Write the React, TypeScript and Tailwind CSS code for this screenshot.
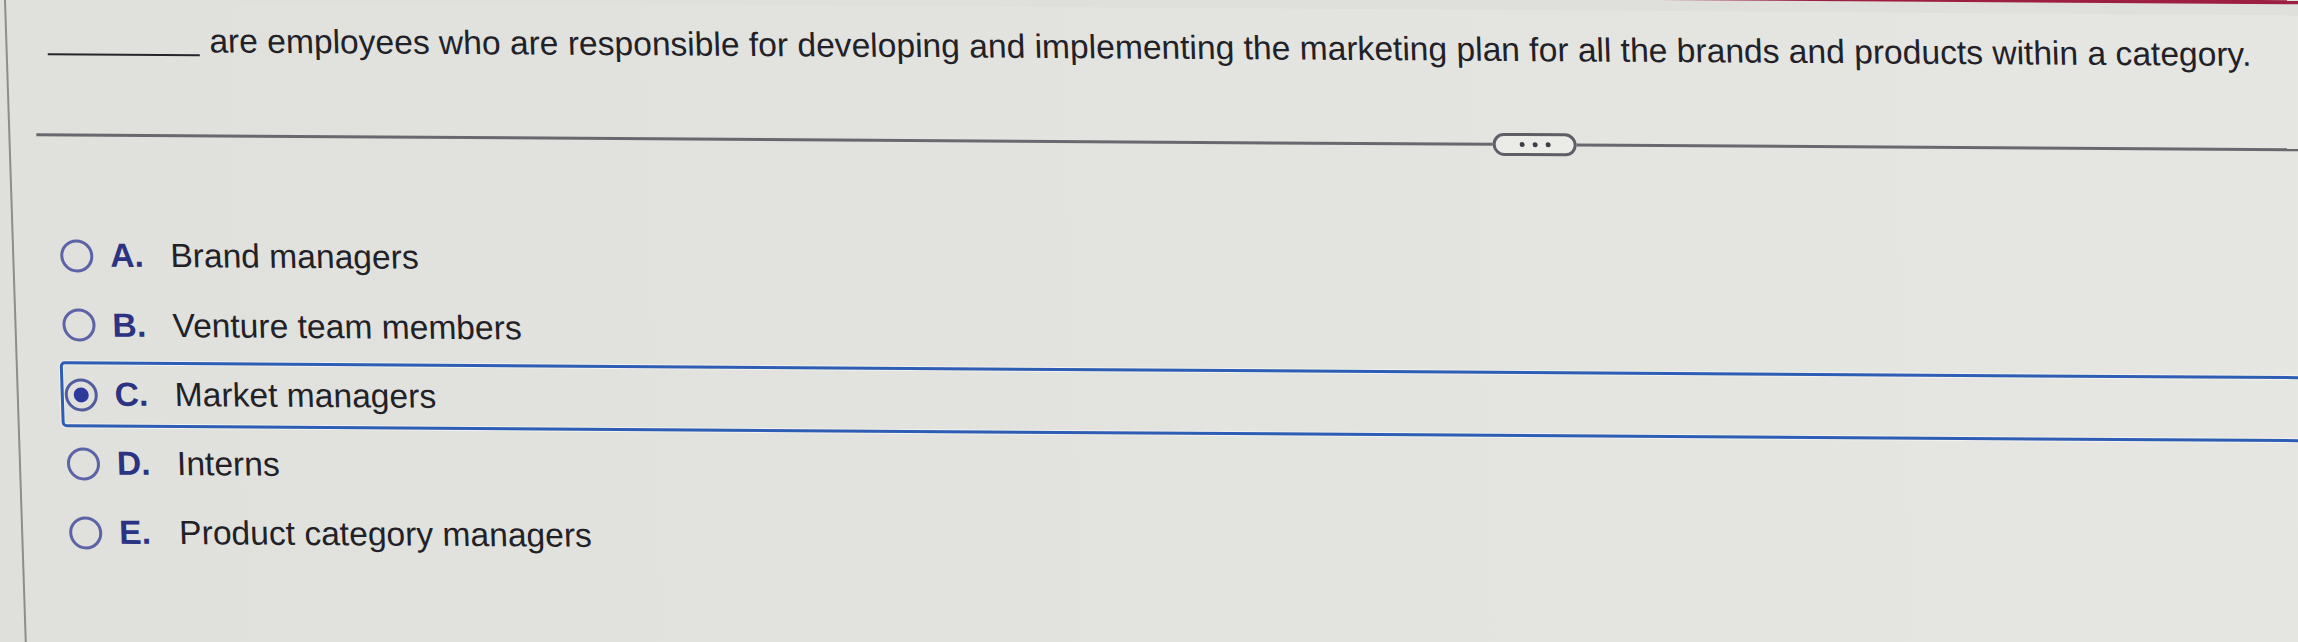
const options = [
  { key: 'A', text: 'Brand managers' },
  { key: 'B', text: 'Venture team members' },
  { key: 'C', text: 'Market managers' },
  { key: 'D', text: 'Interns' },
  { key: 'E', text: 'Product category managers' },
]

const selected = 'C'

function Radio({ checked }: { checked: boolean }) {
  return (
    <span
      className={`ml-[1px] mr-[17px] flex h-[33px] w-[33px] shrink-0 items-center justify-center rounded-full border-[3px] ${
        checked ? 'border-[#525d9e]' : 'border-[#5c63a6]'
      }`}
    >
      {checked ? <span className="h-[15px] w-[15px] rounded-full bg-[#2b3a9c]" /> : null}
    </span>
  )
}

export default function App() {
  return (
    <div className="h-[642px] w-full overflow-hidden bg-[#dfdfdb] font-['Liberation_Sans',Arial,sans-serif]">
      <div className="h-[700px] w-[2500px] origin-top-left skew-x-[1.85deg] skew-y-[0.38deg] pl-[4px]">
        <div className="flex h-full flex-col border-l-2 border-[#8d8d8f] bg-gradient-to-r from-[#e0e0dc] to-[#e6e6e2]">
          {/* header strip, mostly above the frame */}
          <div className="-mt-[15px] h-[4px] shrink-0 bg-gradient-to-r from-transparent from-30% via-[#9c1f40] via-45% to-[#9c1f40]" />

          <p className="mt-[33.6px] pl-[40px] text-[33.6px] leading-[33.6px] whitespace-nowrap text-[#222128]">
            <span className="mb-[-4px] mr-[10px] inline-block h-0 w-[152px] border-b-2 border-[#26252b]" />
            are employees who are responsible for developing and implementing the marketing plan for all the brands and products within a category.
          </p>

          <div className="ml-[26px] mt-[66.8px] flex h-[23px] items-center">
            <div className="h-[3px] w-[1456px] bg-[#68686f]" />
            <button className="flex h-[23px] w-[84px] shrink-0 items-center justify-center gap-[8px] rounded-full border-[3px] border-[#5e5e66] bg-[#ebebe8]">
              <span className="h-[5px] w-[5px] rounded-full bg-[#3d3d45]" />
              <span className="h-[5px] w-[5px] rounded-full bg-[#3d3d45]" />
              <span className="h-[5px] w-[5px] rounded-full bg-[#3d3d45]" />
            </button>
            <div className="h-[3px] flex-1 bg-[#68686f]" />
          </div>

          <div className="ml-[42px] mt-[76.5px] flex flex-col gap-[3.3px]">
            {options.map((o) => {
              const checked = o.key === selected
              return (
                <label
                  key={o.key}
                  className={`flex h-[66px] items-center rounded-[5px] border-[3.5px] ${
                    checked
                      ? 'border-[#2d5db5] shadow-[0_0_0_1px_#f2f2f0,inset_0_0_0_1px_#f2f2f0]'
                      : 'border-transparent'
                  }`}
                >
                  <Radio checked={checked} />
                  <span className="w-[60px] text-[33.6px] font-bold text-[#2b3383]">{o.key}.</span>
                  <span className="text-[33.6px] text-[#222128]">{o.text}</span>
                </label>
              )
            })}
          </div>
        </div>
      </div>
    </div>
  )
}
